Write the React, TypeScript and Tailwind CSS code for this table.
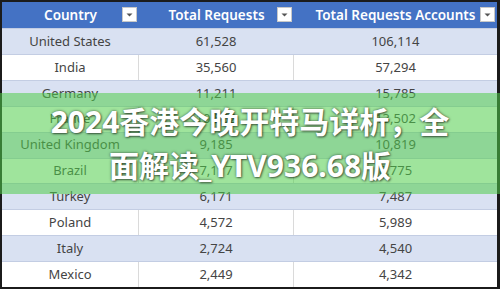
const rows: [string, string, string][] = [
  ["United States", "61,528", "106,114"],
  ["India", "35,560", "57,294"],
  ["Germany", "11,211", "15,785"],
  ["France", "10,502", "13,502"],
  ["United Kingdom", "9,185", "10,819"],
  ["Brazil", "7,117", "8,775"],
  ["Turkey", "6,171", "7,487"],
  ["Poland", "4,572", "5,989"],
  ["Italy", "2,724", "4,540"],
  ["Mexico", "2,449", "4,342"],
];

const cols = ["Country", "Total Requests", "Total Requests Accounts"];
const widths = ["w-[137px]", "w-[155px]", "flex-1"];

function FilterButton() {
  return (
    <div className="absolute right-[2px] top-[5px] w-[15px] h-[15px] bg-white border border-[#c8c8c8] flex items-center justify-center">
      <svg width="7" height="4" viewBox="0 0 7 4">
        <path d="M0.5 0.5 L6.5 0.5 L3.5 3.5 Z" fill="#555" />
      </svg>
    </div>
  );
}

export default function App() {
  return (
    <div className="relative w-[500px] h-[289px] overflow-hidden bg-[#1b1b1b] pt-[2px] pl-[2px] pr-[3px] pb-[2px] font-['Noto_Sans','Noto_Sans_CJK_SC',sans-serif]">
      <div className="flex flex-col h-full bg-white">
        {/* kop */}
        <div className="flex h-[26px] bg-[#4472c4] text-white font-semibold text-[13.5px]">
          {cols.map((c, i) => (
            <div key={c} className={`relative ${widths[i]} flex items-center justify-center`}>
              <span>{c}</span>
              <FilterButton />
            </div>
          ))}
        </div>
        {rows.map((r, ri) => (
          <div
            key={r[0]}
            className={`flex flex-1 text-[13px] text-[#444] border-t border-[#c3cde3] ${ri % 2 === 0 ? "bg-[#d9e1f2]" : "bg-white"}`}
          >
            {r.map((v, ci) => (
              <div
                key={ci}
                className={`${widths[ci]} flex items-center justify-center ${ci < 2 ? (ri % 2 === 0 ? "border-r border-[#d9e1f2]" : "border-r border-[#dadada]") : ""}`}
              >
                {v}
              </div>
            ))}
          </div>
        ))}
      </div>

      {/* groene band met titel */}
      <div className="absolute left-0 right-0 top-[93px] h-[101px] bg-[rgba(80,205,75,0.55)] flex items-center justify-center">
        <div className="text-white font-bold text-[30px] leading-[44px] text-center [text-shadow:0_0_3px_rgba(0,0,0,0.55),1px_1px_2px_rgba(0,0,0,0.45)]">
          2024香港今晚开特马详析，全
          <br />
          面解读_YTV936.68版
        </div>
      </div>
    </div>
  );
}
